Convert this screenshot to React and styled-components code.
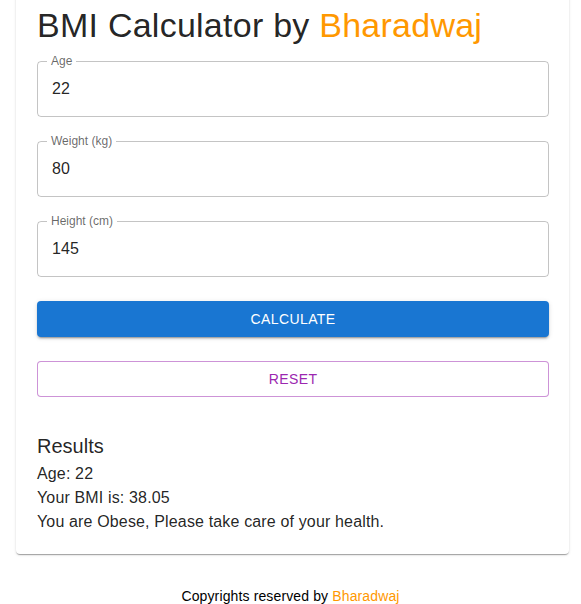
import React from 'react';
import styled, { createGlobalStyle } from 'styled-components';

const GlobalStyle = createGlobalStyle`
  body {
    margin: 0;
    background: #fff;
    font-family: "Liberation Sans", Arial, sans-serif;
    overflow: hidden;
  }
`;

const Page = styled.div`
  width: 581px;
  height: 604px;
  display: flex;
  flex-direction: column;
`;

const Card = styled.div`
  margin: -8px 12px 0 16px;
  padding: 13px 20px 20px 21px;
  background: #fff;
  border-radius: 4px;
  box-shadow: 0px 2px 1px -1px rgba(0, 0, 0, 0.2), 0px 1px 1px 0px rgba(0, 0, 0, 0.14),
    0px 1px 3px 0px rgba(0, 0, 0, 0.12);
`;

const Title = styled.h1`
  margin: 0 0 14px;
  font-size: 34px;
  font-weight: 400;
  line-height: 1.235;
  letter-spacing: 0.25px;
  color: rgba(0, 0, 0, 0.87);
`;

const Accent = styled.span`
  color: #ff9800;
`;

const Form = styled.div`
  display: flex;
  flex-direction: column;
  gap: 24px;
`;

const Field = styled.div`
  height: 56px;
  box-sizing: border-box;
  padding: 0 14px;
  border: 1px solid rgba(0, 0, 0, 0.23);
  border-radius: 4px;
  display: flex;
  align-items: center;
  position: relative;
`;

const Label = styled.span`
  padding: 0 4px;
  font-size: 12px;
  line-height: 1;
  color: rgba(0, 0, 0, 0.6);
  position: absolute;
  top: -7px;
  left: 9px;
  background: #fff;
`;

const Value = styled.div`
  font-size: 16px;
  color: rgba(0, 0, 0, 0.87);
  letter-spacing: 0.15px;
`;

const Button = styled.button`
  height: 36px;
  width: 100%;
  border-radius: 4px;
  font-family: "Liberation Sans", Arial, sans-serif;
  font-size: 14px;
  font-weight: 400;
  letter-spacing: 0.4px;
  text-transform: uppercase;
  background: ${(p) => (p.$outlined ? '#fff' : '#1976d2')};
  color: ${(p) => (p.$outlined ? '#9c27b0' : '#fff')};
  border: ${(p) => (p.$outlined ? '1px solid rgba(156, 39, 176, 0.5)' : 'none')};
  box-shadow: ${(p) =>
    p.$outlined
      ? 'none'
      : '0px 3px 1px -2px rgba(0,0,0,0.2), 0px 2px 2px 0px rgba(0,0,0,0.14), 0px 1px 5px 0px rgba(0,0,0,0.12)'};
`;

const Results = styled.div`
  margin-top: 36px;
  color: rgba(0, 0, 0, 0.87);
`;

const ResultsTitle = styled.h2`
  margin: 0 0 2px;
  font-size: 20px;
  font-weight: 400;
  line-height: 1.334;
`;

const Line = styled.p`
  margin: 0;
  font-size: 16px;
  line-height: 24px;
  letter-spacing: 0.15px;
`;

const Footer = styled.footer`
  margin-top: 34px;
  text-align: center;
  font-size: 14px;
  letter-spacing: 0.13px;
  color: #000;
`;

const inputs = [
  { label: 'Age', value: '22' },
  { label: 'Weight (kg)', value: '80' },
  { label: 'Height (cm)', value: '145' },
];

export default function App() {
  return (
    <Page>
      <GlobalStyle />
      <Card>
        <Title>
          BMI Calculator by <Accent>Bharadwaj</Accent>
        </Title>
        <Form>
          {inputs.map((f) => (
            <Field key={f.label}>
              <Label>{f.label}</Label>
              <Value>{f.value}</Value>
            </Field>
          ))}
          <Button>Calculate</Button>
          <Button $outlined>Reset</Button>
        </Form>
        <Results>
          <ResultsTitle>Results</ResultsTitle>
          <Line>Age: 22</Line>
          <Line>Your BMI is: 38.05</Line>
          <Line>You are Obese, Please take care of your health.</Line>
        </Results>
      </Card>
      <Footer>
        Copyrights reserved by <Accent>Bharadwaj</Accent>
      </Footer>
    </Page>
  );
}
